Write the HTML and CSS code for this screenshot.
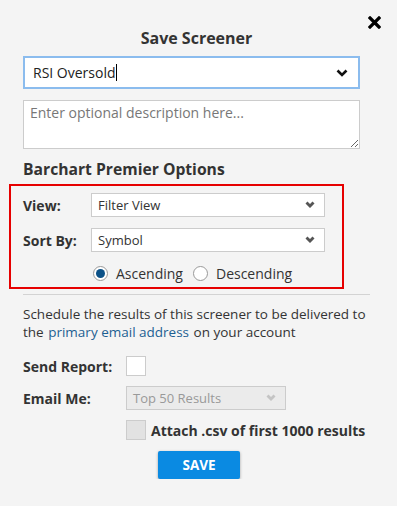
FILE: index.html
```html
<!DOCTYPE html>
<html>
<head>
    <title>Save Screener</title>
    <link rel="stylesheet" href="styles.css">
</head>
<body>
    <div class="modal">
        <a class="close-btn" href="#">
            <svg width="13" height="13" viewBox="0 0 13 13"><path d="M2 2L11 11M11 2L2 11" stroke="#000" stroke-width="3.2" stroke-linecap="square"/></svg>
        </a>
        <h2 class="title">Save Screener</h2>

        <div class="name-input">
            <span class="name-text">RSI Oversold</span><span class="caret"></span>
            <svg class="name-chevron" width="12" height="8" viewBox="0 0 12 8"><path d="M1.5 1.5L6 6L10.5 1.5" fill="none" stroke="#111" stroke-width="2.6"/></svg>
        </div>
        <textarea class="description" placeholder="Enter optional description here..."></textarea>

        <h3 class="section-title">Barchart Premier Options</h3>
        <div class="premier-box">
            <div class="field-row">
                <label class="field-label">View:</label>
                <div class="select-box">
                    <span>Filter View</span>
                    <svg class="select-arrow" width="10" height="8" viewBox="0 0 10 8"><path d="M0.5 2.5L2.5 0.5L5 3L7.5 0.5L9.5 2.5L5 7Z" fill="#555"/></svg>
                </div>
            </div>
            <div class="field-row">
                <label class="field-label">Sort By:</label>
                <div class="select-box">
                    <span>Symbol</span>
                    <svg class="select-arrow" width="10" height="8" viewBox="0 0 10 8"><path d="M0.5 2.5L2.5 0.5L5 3L7.5 0.5L9.5 2.5L5 7Z" fill="#555"/></svg>
                </div>
            </div>
            <div class="radio-row">
                <label class="radio"><span class="radio-dot checked"></span>Ascending</label>
                <label class="radio"><span class="radio-dot"></span>Descending</label>
            </div>
        </div>

        <div class="divider"></div>

        <div class="schedule-text">
            <div>Schedule the results of this screener to be delivered to</div>
            <div><span>the</span> <a href="#">primary email address</a> <span>on your account</span></div>
        </div>

        <div class="report-row">
            <label class="report-label">Send Report:</label>
            <span class="checkbox"></span>
        </div>
        <div class="report-row">
            <label class="report-label">Email Me:</label>
            <div class="select-box disabled">
                <span>Top 50 Results</span>
                <svg class="select-arrow" width="10" height="8" viewBox="0 0 10 8"><path d="M0.5 2.5L2.5 0.5L5 3L7.5 0.5L9.5 2.5L5 7Z" fill="#c4c4c4"/></svg>
            </div>
        </div>
        <div class="report-row attach-row">
            <span class="checkbox disabled"></span>
            <label class="attach-label">Attach .csv of first 1000 results</label>
        </div>

        <div class="actions">
            <button class="save-btn">SAVE</button>
        </div>
    </div>
</body>
</html>
```

FILE: styles.css
```css
body {
    margin: 0;
    background-color: #f4f4f4;
    font-family: "Open Sans", Arial, sans-serif;
    color: #333;
}

.modal {
    position: relative;
    padding: 28px 27px 0 23px;
}

/* Close icon sits over the corner */
.close-btn {
    position: absolute;
    top: 16px;
    right: 16px;
    display: block;
    line-height: 0;
}

.title {
    margin: 0 0 8px;
    font-size: 16px;
    line-height: 20px;
    font-weight: 700;
    text-align: center;
}

.name-input {
    display: flex;
    align-items: center;
    width: 337px;
    height: 33px;
    box-sizing: border-box;
    padding: 0 10px 0 8px;
    background-color: white;
    border: 2px solid #8bbcee;
    font-size: 14px;
}

.name-text {
    color: #222;
}

.caret {
    width: 1px;
    height: 17px;
    background-color: #000;
}

.name-chevron {
    margin-left: auto;
}

.description {
    display: block;
    width: 337px;
    height: 49px;
    box-sizing: border-box;
    margin-top: 11px;
    padding: 2px 6px;
    border: 1px solid #ccc;
    background-color: white;
    font-family: "Open Sans", Arial, sans-serif;
    font-size: 14px;
    line-height: 20px;
}

.description::placeholder {
    color: #777;
}

.section-title {
    margin: 10px 0 4px;
    font-size: 15.7px;
    line-height: 21px;
    font-weight: 700;
}

.premier-box {
    width: 335px;
    box-sizing: border-box;
    margin-left: -14px;
    padding: 7px 17px 4px 12px;
    border: 2px solid #e60000;
}

.field-row {
    display: flex;
    align-items: center;
    margin-bottom: 11px;
}

.field-label {
    width: 68px;
    font-size: 14px;
    font-weight: 700;
}

.select-box {
    display: flex;
    align-items: center;
    width: 234px;
    height: 24px;
    box-sizing: border-box;
    padding: 0 9px 0 6px;
    background-color: white;
    border: 1px solid #ccc;
    font-size: 13px;
    color: #333;
}

.select-arrow {
    margin-left: auto;
}

.select-box.disabled {
    width: 160px;
    background-color: #ebebeb;
    color: #999;
}

.radio-row {
    display: flex;
    align-items: center;
    gap: 10px;
    margin-left: 70px;
    height: 20px;
}

.radio {
    display: flex;
    align-items: center;
    font-size: 14px;
}

.radio-dot {
    position: relative;
    width: 15px;
    height: 15px;
    box-sizing: border-box;
    margin-right: 8px;
    border: 1px solid #999;
    border-radius: 50%;
    background-color: white;
}

.radio-dot.checked:after {
    position: absolute;
    content: "";
    top: 2px;
    left: 2px;
    width: 9px;
    height: 9px;
    border-radius: 50%;
    background-color: #0c5288;
}

.divider {
    width: 347px;
    height: 1px;
    margin-top: 5px;
    background-color: #d3d3d3;
}

.schedule-text {
    margin: 10px 0 15px;
    font-size: 13.5px;
    line-height: 18px;
}

.schedule-text a {
    margin: 0 1px;
    color: #1d5f92;
    text-decoration: none;
}

.report-row {
    display: flex;
    align-items: center;
    margin-bottom: 10px;
}

.report-label {
    width: 103px;
    font-size: 14px;
    font-weight: 700;
}

.checkbox {
    width: 20px;
    height: 20px;
    box-sizing: border-box;
    border: 1px solid #ccc;
    background-color: white;
}

.checkbox.disabled {
    background-color: #e2e2e2;
}

.attach-row {
    padding-left: 103px;
}

.attach-label {
    margin-left: 5px;
    font-size: 14px;
    font-weight: 700;
}

.actions {
    display: flex;
    justify-content: center;
    padding-left: 5px;
    margin-top: 11px;
}

.save-btn {
    width: 82px;
    height: 28px;
    border: none;
    border-radius: 2px;
    background-color: #0a8ae2;
    color: white;
    font-family: "Open Sans", Arial, sans-serif;
    font-size: 13.5px;
    font-weight: 700;
    box-shadow: 0 1px 3px rgba(0, 0, 0, 0.35);
    cursor: pointer;
}
```
